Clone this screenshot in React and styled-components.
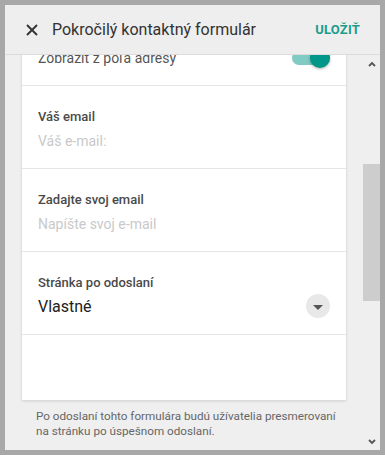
import styled, { createGlobalStyle } from "styled-components";

const GlobalStyle = createGlobalStyle`
  html, body {
    margin: 0;
    padding: 0;
    background: #a8a8a8;
    font-family: Roboto, "Liberation Sans", sans-serif;
  }
`;

const Frame = styled.div`
  width: 375px;
  height: 445px;
  border: 5px solid #a8a8a8;
  background: #efefef;
  display: flex;
  flex-direction: column;
  overflow: hidden;
`;

const Header = styled.div`
  position: relative;
  z-index: 2;
  height: 49px;
  flex-shrink: 0;
  display: flex;
  align-items: center;
  padding: 0 20px 0 21px;
  background: #eeeeee;
  border-bottom: 1px solid #dcdcdc;
`;

const CloseButton = styled.button`
  border: 0;
  padding: 0;
  background: none;
  width: 12px;
  height: 12px;
  display: flex;
  margin-right: 14px;
  margin-top: 1px;
  color: #333;
`;

const Title = styled.h1`
  flex: 1;
  margin: 0;
  font-size: 16px;
  font-weight: 400;
  color: #333;
`;

const SaveButton = styled.button`
  border: 0;
  padding: 0;
  background: none;
  font-family: Roboto, "Liberation Sans", sans-serif;
  font-size: 13px;
  font-weight: 700;
  letter-spacing: 0.2px;
  color: #1b9c8c;
`;

const Body = styled.div`
  flex: 1;
  display: flex;
  min-height: 0;
`;

const Viewport = styled.div`
  flex: 1;
  overflow: hidden;
  padding: 0 17px;
`;

const Card = styled.div`
  margin-top: -28px;
  background: #fff;
  box-shadow: 0 1px 3px rgba(0, 0, 0, 0.14);
  padding-bottom: 65px;
`;

const Row = styled.div`
  box-sizing: border-box;
  height: ${(p) => p.$height || 83}px;
  padding: 22px 16px 0;
  border-bottom: 1px solid #e6e6e6;
`;

const ToggleRow = styled(Row)`
  display: flex;
  justify-content: space-between;
  align-items: flex-start;
`;

const PlainText = styled.div`
  font-size: 14px;
  line-height: 18px;
  color: #555;
`;

const Label = styled.div`
  font-size: 13px;
  font-weight: 500;
  line-height: 18px;
  color: #4a4a4a;
`;

const Placeholder = styled.div`
  margin-top: 5px;
  font-size: 14px;
  line-height: 20px;
  color: #c9c9c9;
`;

const SelectLine = styled.div`
  margin-top: 5px;
  display: flex;
  align-items: center;
  justify-content: space-between;
  height: 20px;
`;

const SelectValue = styled.div`
  font-size: 16px;
  line-height: 20px;
  color: #212121;
`;

const DropButton = styled.div`
  width: 24px;
  height: 24px;
  border-radius: 50%;
  background: #e8e8e8;
  display: flex;
  align-items: center;
  justify-content: center;
  margin-top: -2px;

  &::after {
    content: "";
    border-left: 5px solid transparent;
    border-right: 5px solid transparent;
    border-top: 5px solid #555;
    margin-top: 2px;
  }
`;

const Toggle = styled.div`
  position: relative;
  width: 38px;
  height: 14px;
  border-radius: 7px;
  background: #80cbc4;
  margin-top: 2px;

  &::after {
    content: "";
    position: absolute;
    right: 0;
    top: -3px;
    width: 20px;
    height: 20px;
    border-radius: 50%;
    background: #009688;
    box-shadow: 0 1px 3px rgba(0, 0, 0, 0.3);
  }
`;

const Note = styled.p`
  margin: 9px 0 0;
  padding: 0 0 0 14px;
  font-size: 11.7px;
  line-height: 15px;
  color: #666;
`;

const ScrollBar = styled.div`
  width: 17px;
  display: flex;
  flex-direction: column;
  background: #efefef;
`;

const ScrollArrow = styled.div`
  height: 17px;
  display: flex;
  align-items: center;
  justify-content: center;
  color: #555;
`;

const ScrollTrack = styled.div`
  flex: 1;
`;

const Thumb = styled.div`
  margin-top: ${(p) => p.$top}px;
  height: ${(p) => p.$size}px;
  background: #cdcdcd;
`;

const Chevron = ({ up }) => (
  <svg width="8" height="6" viewBox="0 0 8 6">
    <path
      d={up ? "M1 5 L4 2 L7 5" : "M1 1 L4 4 L7 1"}
      fill="none"
      stroke="currentColor"
      strokeWidth="1.8"
    />
  </svg>
);

export default function App() {
  return (
    <>
      <GlobalStyle />
      <Frame>
        <Header>
          <CloseButton>
            <svg width="12" height="12" viewBox="0 0 12 12">
              <path
                d="M1 1 L11 11 M11 1 L1 11"
                stroke="currentColor"
                strokeWidth="1.9"
              />
            </svg>
          </CloseButton>
          <Title>Pokročilý kontaktný formulár</Title>
          <SaveButton>ULOŽIŤ</SaveButton>
        </Header>
        <Body>
          <Viewport>
            <Card>
              <ToggleRow $height={59}>
                <PlainText>Zobraziť z poľa adresy</PlainText>
                <Toggle />
              </ToggleRow>
              <Row>
                <Label>Váš email</Label>
                <Placeholder>Váš e-mail:</Placeholder>
              </Row>
              <Row>
                <Label>Zadajte svoj email</Label>
                <Placeholder>Napíšte svoj e-mail</Placeholder>
              </Row>
              <Row>
                <Label>Stránka po odoslaní</Label>
                <SelectLine>
                  <SelectValue>Vlastné</SelectValue>
                  <DropButton />
                </SelectLine>
              </Row>
            </Card>
            <Note>
              Po odoslaní tohto formulára budú užívatelia presmerovaní
              <br />
              na stránku po úspešnom odoslaní.
            </Note>
          </Viewport>
          <ScrollBar>
            <ScrollArrow>
              <Chevron up />
            </ScrollArrow>
            <ScrollTrack>
              <Thumb $top={92} $size={137} />
            </ScrollTrack>
            <ScrollArrow>
              <Chevron />
            </ScrollArrow>
          </ScrollBar>
        </Body>
      </Frame>
    </>
  );
}
